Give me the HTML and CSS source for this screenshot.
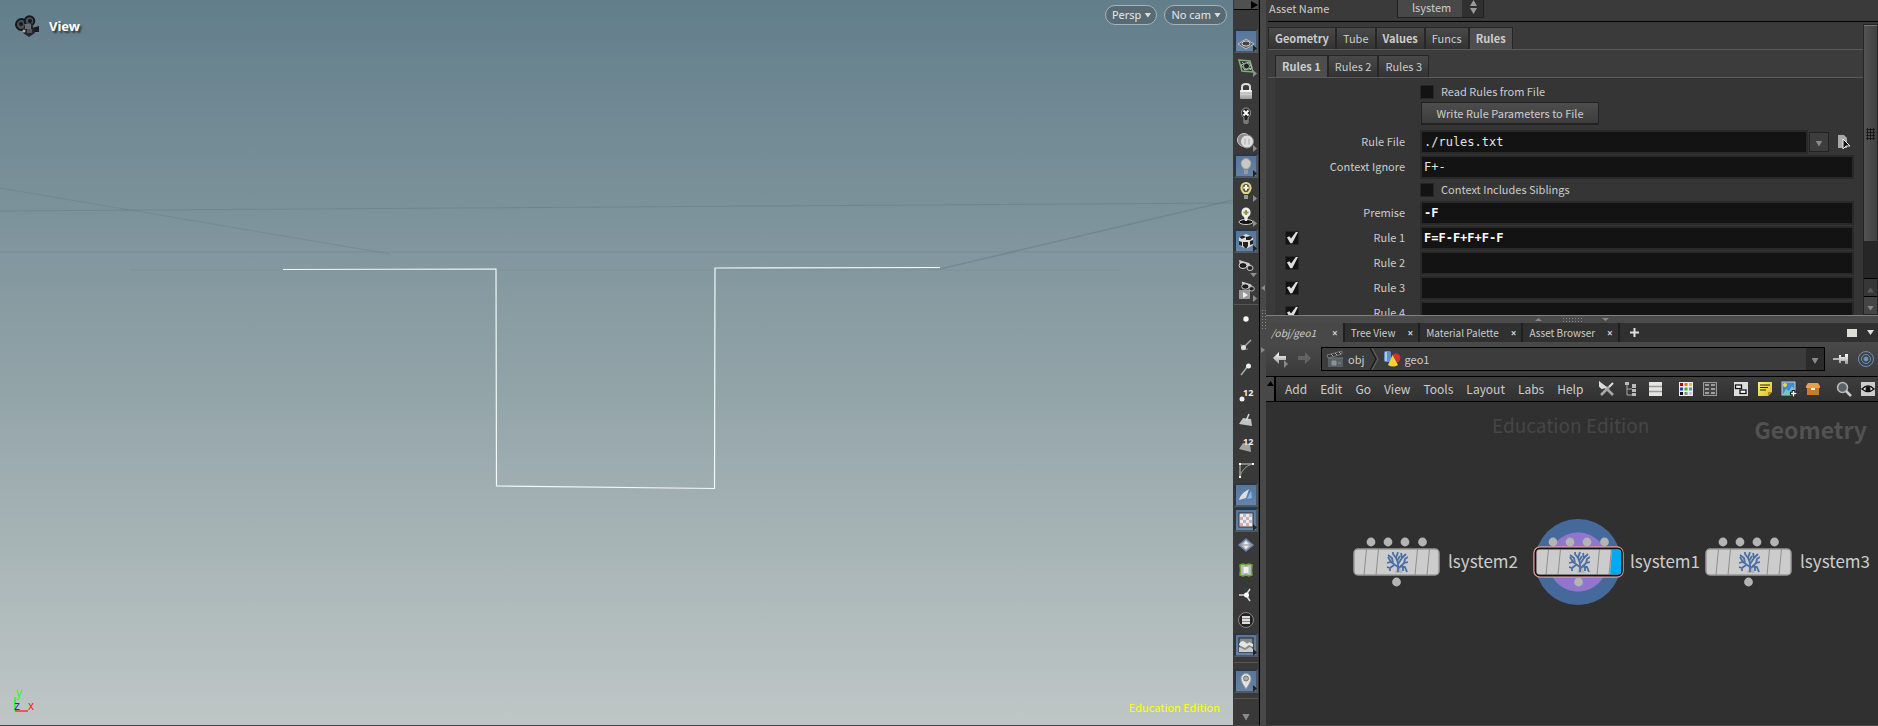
FILE: index.html
```
<!DOCTYPE html>
<html lang="en">
<head>
<meta charset="utf-8">
<title>/obj/geo1</title>
<link rel="stylesheet" href="styles.css">
</head>
<body>
<svg class="defs" aria-hidden="true">
  <defs>
    <linearGradient id="silver" x1="0" y1="0" x2="0" y2="1"><stop offset="0" stop-color="#fff"/><stop offset="1" stop-color="#999"/></linearGradient>
    <linearGradient id="yellow" x1="0" y1="0" x2="1" y2="1"><stop offset="0" stop-color="#fff27a"/><stop offset="1" stop-color="#d8c21c"/></linearGradient>
    <symbol id="tree" viewBox="0 0 22 22">
      <path d="M9 22L11 17H14L17 22Z" fill="#b4b4b0"/>
      <g fill="none" stroke="#4a6fa5" stroke-width="1.8">
        <path d="M12 21V12L10 7L12 1M10 7L7 3V1M12 13L16 7L15 2M16 7L20 3M12 16L5 11L1 12M5 11L2 6M7 12L6 7L2 4M8 14L4 17L1 16M13 17L18 12L22 11M18 12L19 8L22 6M14 15L19 16L21 21M17 16L17 20M11 10L14 5M4 17L4 20"/>
      </g>
    </symbol>
    <symbol id="node" viewBox="0 0 88 50">
      <g fill="#b4b4b4"><circle cx="18" cy="5" r="4.4"/><circle cx="35" cy="5" r="4.4"/><circle cx="52" cy="5" r="4.4"/><circle cx="69.500" cy="5" r="4.400"/><circle cx="43.500" cy="45" r="4.400"/></g>
      <rect x="1" y="12" width="85" height="26" rx="4" fill="#ccc" stroke="#999" stroke-width="1.500"/>
      <path d="M13.500 12L11 38M25.500 12L23 38M64.500 12L62 38M76.500 12L74 38" stroke="#8e8e8e" fill="none"/>
    </symbol>
    <symbol id="spec" viewBox="0 0 20 20">
      <path d="M3 4L13 7L17 12L4 9Z" fill="#ccc"/><ellipse cx="7" cy="9.500" rx="4" ry="3" fill="#1c1c1c" stroke="#ddd"/><ellipse cx="14" cy="12" rx="3" ry="2.500" fill="#222" stroke="#ccc"/>
    </symbol>
  </defs>
</svg>
<main class="app">
  <section class="viewport" aria-label="Viewport">
    <svg class="scene" viewBox="0 0 1233 725" preserveAspectRatio="none">
      <g fill="none" stroke="#4c6671" stroke-opacity=".26">
        <path d="M0 188L390 254" stroke-opacity=".2"/><path d="M0 211L1233 203"/><path d="M0 252H1233" stroke-opacity=".16"/><path d="M940 269L1233 200" stroke-width="1.500"/><path d="M130 270H1120" stroke-opacity=".12"/>
      </g>
      <path d="M283 269.500L496 269L496.500 486L714.500 488.500L715 268L940 267.500" fill="none" stroke="#f4f8f8" stroke-width="1.200"/>
    </svg>
    <header class="view-head">
      <div class="view-title">
        <svg width="26" height="24" viewBox="0 0 26 24"><path d="M17 13L24 11V17L18 17Z" fill="#191c1f"/><circle cx="6.500" cy="9.500" r="5.500" fill="#4b4f53" stroke="#16191b" stroke-width="2"/><circle cx="14.500" cy="6" r="4.800" fill="#4b4f53" stroke="#16191b" stroke-width="2"/><circle cx="6" cy="9" r="2" fill="#16191b"/><circle cx="15" cy="6" r="2" fill="#16191b"/><path d="M9 11L17 8L20 18L14 22L8 18Z" fill="#24282b"/><rect x="10" y="9" width="6" height="5" fill="#666d73"/><rect x="12" y="14" width="5" height="4" fill="#4f555a"/><circle cx="9" cy="16" r="1.500" fill="#aaa"/></svg>
        <h1>View</h1>
      </div>
      <div class="pills"><button class="pill">Persp<i class="tri"></i></button><button class="pill">No cam<i class="tri"></i></button></div>
    </header>
    <footer class="view-foot">
      <svg class="axes" width="24" height="32" viewBox="0 0 24 32"><path d="M4 27V13" stroke="#3f3" stroke-width="2"/><path d="M4 27H17" stroke="#e55" stroke-width="2"/><text x="5" y="13" fill="#2f2">y</text><text x="3" y="26" fill="#22f">z</text><text x="17" y="26" fill="#f22">x</text></svg>
      <span class="edition">Education Edition</span>
    </footer>
  </section>

  <nav class="tools" aria-label="Display options">
    <button class="tools-top" aria-label="Expand"><svg width="7" height="8" viewBox="0 0 7 8"><path d="M0 0L7 4L0 8Z" fill="#000"/></svg></button>
    <button class="tool on more"><svg viewBox="0 0 20 20"><path d="M2 13L10 8L18 13L10 18Z" fill="#666" stroke="#bbb"/><path d="M6 10.500L14 15.500M14 10.500L6 15.500" stroke="#999"/><ellipse cx="10" cy="12.500" rx="4" ry="2.500" fill="#444" stroke="#ccc"/></svg></button>
    <button class="tool more"><svg viewBox="0 0 20 20"><path d="M3 4L14 5L17 16L6 15Z" fill="#333" stroke="#79b277" stroke-width="1.500"/><path d="M6 6L15 14M5 9L13 6L16 12L9 14Z" fill="none" stroke="#bbb"/><circle cx="10.500" cy="10" r="3" fill="#222" stroke="#8dbb8a"/></svg></button>
    <button class="tool"><svg viewBox="0 0 20 20"><path d="M6 10V6Q6 3 10 3T14 6V10" fill="none" stroke="#ddd" stroke-width="2"/><rect x="4" y="9" width="12" height="9" rx="1" fill="url(#silver)"/><path d="M4 12H16M4 15H16" stroke="#aaa"/></svg></button>
    <button class="tool"><svg viewBox="0 0 20 20"><path d="M8 12Q5 9 5.500 6.500A4.500 4.500 0 0 1 14.500 6.500Q15 9 12 12V17H8Z" fill="#222" stroke="#999"/><path d="M7.500 4.500L12.500 9.500M12.500 4.500L7.500 9.500" stroke="#fff" stroke-width="1.800"/><path d="M8 14H12V18H8Z" fill="#777"/></svg></button>
    <button class="tool more"><svg viewBox="0 0 20 20"><circle cx="8" cy="9" r="6.500" fill="#888" stroke="#ccc"/><circle cx="11" cy="10.500" r="6.500" fill="#ddd" stroke="#888"/><path d="M9 7.500V13.500M13 7.500V13.500" stroke="#aaa"/></svg></button>
    <button class="tool on more"><svg viewBox="0 0 20 20"><path d="M8 13Q5 10 5 7.500A5 5 0 0 1 15 7.500Q15 10 12 13Z" fill="#c8c8c4" stroke="#999"/><path d="M8 14H12V18H8Z" fill="#999"/></svg></button>
    <button class="tool more"><svg viewBox="0 0 20 20"><path d="M8 12Q5 9 5.500 6.500A4.500 4.500 0 0 1 14.500 6.500Q15 9 12 12Z" fill="#555" stroke="#ded885" stroke-width="2"/><path d="M10 4V9.500M7.300 6.800H12.700" stroke="#fffbd0" stroke-width="2"/><path d="M8 14H12V18H8Z" fill="#999"/></svg></button>
    <button class="tool more"><svg viewBox="0 0 20 20"><ellipse cx="10" cy="16" rx="7" ry="2.500" fill="#111" stroke="#ccc"/><path d="M8 11Q5 9 5.500 6A4.500 4.500 0 0 1 14.500 6Q15 9 12 11L11 15H9Z" fill="#eee"/><path d="M10 4V9M7.500 6.500H12.500" stroke="#99983c" stroke-width="2"/></svg></button>
    <button class="tool on more"><svg viewBox="0 0 20 20"><path d="M3 6L10 3L17 6V14L10 18L3 14Z" fill="#ddd"/><path d="M3 6L7 4.500L10 6L6 8ZM10 6L14 5L17 6L14 9H10ZM3 10L6 11V15L3 14ZM7 11H12V15L10 18L7 15ZM14 10L17 9V13L14 14Z" fill="#222"/></svg></button>
    <button class="tool down"><svg viewBox="0 0 20 20"><use href="#spec" width="20" height="20"/></svg></button>
    <button class="tool more"><svg viewBox="0 0 20 20"><path d="M3 9H14V18H3Z" fill="#999"/><path d="M7 11L12 14L7 17Z" fill="#eee"/><use href="#spec" x="3" y="-3" width="18" height="18"/></svg></button>
    <hr>
    <button class="tool"><svg viewBox="0 0 20 20"><circle cx="10" cy="9" r="2.700" fill="#f4f4f0"/></svg></button>
    <button class="tool"><svg viewBox="0 0 20 20"><path d="M8 12L15 5" stroke="#aaa" stroke-width="1.500"/><path d="M5 9L6 15L12 14" fill="none" stroke="#888"/><circle cx="7.500" cy="12.500" r="2.500" fill="#ddd"/></svg></button>
    <button class="tool"><svg viewBox="0 0 20 20"><path d="M5 15L12 6" stroke="#aaa" stroke-width="1.500"/><circle cx="12.500" cy="6" r="2.500" fill="#eee"/></svg></button>
    <button class="tool"><svg viewBox="0 0 20 20"><circle cx="6" cy="14" r="2.500" fill="#eee"/><text x="7" y="11" class="num">12</text></svg></button>
    <button class="tool"><svg viewBox="0 0 20 20"><path d="M3 14L7 8L15 9L16 16Z" fill="#c4c4be"/><path d="M10 11L13 4" stroke="#ddd" stroke-width="1.500"/></svg></button>
    <button class="tool"><svg viewBox="0 0 20 20"><path d="M3 14L7 8L14 9L15 17Z" fill="#a4a49e"/><text x="7" y="10" class="num">12</text></svg></button>
    <button class="tool"><svg viewBox="0 0 20 20"><path d="M4 17V4H17" fill="none" stroke="#ccc"/><path d="M4 16Q7 7 16 4" fill="none" stroke="#999"/><path d="M3 3H5V5H3ZM16 3H18V5H16ZM3 16H5V18H3Z" fill="#fff"/></svg></button>
    <button class="tool on"><svg viewBox="0 0 20 20"><path d="M6 15L16 5L17 15Z" fill="#4f82be"/><path d="M3 15Q4 9 13 4L10 13Z" fill="#ddd"/><path d="M11 14L16 13L15 6Z" fill="#8db4dc"/></svg></button>
    <button class="tool on more"><svg viewBox="0 0 20 20"><rect x="3" y="3" width="14" height="14" fill="#eceae6" stroke="#333"/><path d="M7 4H10V7H7ZM13 4H16V7H13ZM7 10H10V13H7ZM13 10H16V13H13Z" fill="#a9bdd8"/><path d="M4 7H7V10H4ZM10 7H13V10H10ZM4 13H7V16H4ZM10 13H13V16H10Z" fill="#dfa6a3"/></svg></button>
    <button class="tool"><svg viewBox="0 0 20 20"><path d="M10 4L17 10L10 16L3 10Z" fill="#bbb" stroke="#5d83b0" stroke-width="1.500"/><path d="M10 6L13 10L10 14L7 10Z" fill="#eee"/><path d="M3 10H17" stroke="#888"/></svg></button>
    <button class="tool"><svg viewBox="0 0 20 20"><path d="M4 5L7 4L10 5L13 4L16 5L15.500 10L16 15L13 16L10 15L7 16L4 15L4.500 10Z" fill="#bbb" stroke="#68a83e" stroke-width="1.500"/><rect x="7.500" y="7" width="5" height="6" fill="#eee"/></svg></button>
    <button class="tool"><svg viewBox="0 0 20 20"><path d="M3 10H10L14 4M10 10L14 16" fill="none" stroke="#ddd" stroke-width="1.500"/><circle cx="10.500" cy="10" r="2.500" fill="#fff"/></svg></button>
    <button class="tool"><svg viewBox="0 0 20 20"><circle cx="10" cy="10" r="7.500" fill="#222" stroke="#888"/><path d="M6 6H14V14H6Z" fill="#ddd"/><path d="M6 8.500H14M6 11.500H14" stroke="#888"/></svg></button>
    <button class="tool on more"><svg viewBox="0 0 20 20"><rect x="3" y="3" width="14" height="14" fill="#888" stroke="#222"/><path d="M3 9Q6 4 9 7T13 7L17 9V12L13 10L9 13L3 10Z" fill="#e5e5e5"/><path d="M3 12L9 15L14 12L17 14V17H3Z" fill="#ccc"/></svg></button>
    <hr class="wide">
    <button class="tool on more"><svg viewBox="0 0 20 20"><path d="M10 18Q5 11 5 7.500A5 5 0 0 1 15 7.500Q15 11 10 18Z" fill="#e2e2de" stroke="#999"/><circle cx="10" cy="7.500" r="2.500" fill="#aaa" stroke="#777"/></svg></button>
    <hr class="wide">
    <button class="tool" aria-label="More"><i class="tri dim"></i></button>
  </nav>

  <div class="vsplit"><i class="left"></i><i class="grip"></i><i class="right"></i></div>

  <div class="side">
    <section class="params" aria-label="Parameters">
      <div class="asset"><label for="asset">Asset Name</label><span class="combo"><select id="asset"><option>lsystem</option></select><svg width="7" height="14" viewBox="0 0 7 14"><path d="M0 6L3.500 0L7 6ZM0 8H7L3.500 14Z" fill="#999"/></svg></span></div>
      <div class="pbody">
        <div class="pmain">
          <div class="tabs"><button><b>Geometry</b></button><button>Tube</button><button><b>Values</b></button><button>Funcs</button><button class="sel"><b>Rules</b></button></div>
          <div class="tabs inner"><button class="sel"><b>Rules 1</b></button><button>Rules 2</button><button>Rules 3</button></div>
          <form class="form">
            <div class="row check"><input type="checkbox" id="read"><label for="read">Read Rules from File</label></div>
            <div class="row action"><button type="button" class="btn">Write Rule Parameters to File</button></div>
            <div class="row"><label class="lab" for="rf">Rule File</label><input class="field" id="rf" value="./rules.txt"><button type="button" class="drop" aria-label="Recent files"><i class="tri dim"></i></button><button type="button" class="file" aria-label="Choose file"><svg width="14" height="16" viewBox="0 0 14 16"><path d="M1 1H7L10 4V14H1Z" fill="#a9a9a9"/><path d="M6 5L13 12L9 12L6 15Z" fill="#111" stroke="#eee"/></svg></button></div>
            <div class="row"><label class="lab" for="ci">Context Ignore</label><input class="field" id="ci" value="F+-"></div>
            <div class="row check"><input type="checkbox" id="sib"><label for="sib">Context Includes Siblings</label></div>
            <div class="row"><label class="lab" for="pr">Premise</label><input class="field bold" id="pr" value="-F"></div>
            <div class="row"><input type="checkbox" checked aria-label="Use rule 1"><label class="lab" for="r1">Rule 1</label><input class="field bold" id="r1" value="F=F-F+F+F-F"></div>
            <div class="row"><input type="checkbox" checked aria-label="Use rule 2"><label class="lab" for="r2">Rule 2</label><input class="field" id="r2"></div>
            <div class="row"><input type="checkbox" checked aria-label="Use rule 3"><label class="lab" for="r3">Rule 3</label><input class="field" id="r3"></div>
            <div class="row"><input type="checkbox" checked aria-label="Use rule 4"><label class="lab" for="r4">Rule 4</label><input class="field" id="r4"></div>
          </form>
        </div>
        <div class="scroll"><div class="thumb"><i></i></div><div class="track"></div><button class="up" aria-label="Scroll up"><i class="tri"></i></button><button aria-label="Scroll down"><i class="tri"></i></button></div>
      </div>
    </section>

    <div class="hsplit"><i class="tri flip"></i><i class="grip"></i><i class="tri"></i></div>

    <section class="network" aria-label="Network editor">
      <div class="panes"><button class="sel"><em>/obj/geo1</em><span>×</span></button><button>Tree View<span>×</span></button><button>Material Palette<span>×</span></button><button>Asset Browser<span>×</span></button><button class="plus" aria-label="New tab"><svg width="9" height="9" viewBox="0 0 9 9"><path d="M4.500 0V9M0 4.500H9" stroke="#ddd" stroke-width="2"/></svg></button><i class="win"></i><i class="tri"></i></div>
      <div class="path">
        <button aria-label="Back"><svg width="17" height="18" viewBox="0 0 17 18"><path d="M1 8L7 2V6H14V10H7V14Z" fill="url(#silver)"/><path d="M12 10L16 14L12 18Z" fill="#888"/></svg></button>
        <button aria-label="Forward"><svg width="17" height="18" viewBox="0 0 17 18"><path d="M14 8L8 2V6H1V10H8V14Z" fill="#626262"/></svg></button>
        <div class="crumbs">
          <svg width="18" height="18" viewBox="0 0 18 18"><rect x="2" y="8" width="15" height="9" fill="#566066"/><path d="M1 5L16 1V4L2 8ZM2 8H17" fill="#333" stroke="#777"/><path d="M5 4L7 6M9 3L11 5M13 2L15 4" stroke="#aaa"/><path d="M6 11H10V15H6ZM12 13H15" fill="#88949a" stroke="#88949a"/></svg>
          <a href="#obj">obj</a>
          <svg class="chev" width="10" height="22" viewBox="0 0 10 22"><path d="M1 0L7 11L1 22" fill="none" stroke="#111"/><path d="M3 0L9 11L3 22" fill="none" stroke="#666"/></svg>
          <svg width="18" height="18" viewBox="0 0 18 18"><rect x="1" y="1" width="7" height="11" rx="2" fill="#5f8fcd"/><rect x="2" y="2" width="2" height="9" fill="#a9c8ed"/><circle cx="13" cy="8" r="4.500" fill="#d2342c"/><path d="M9.500 5L15 15Q10 18 5 15Z" fill="#f2d535"/></svg>
          <a href="#geo1">geo1</a>
          <button class="pdrop" aria-label="Path history"><i class="tri dim"></i></button>
        </div>
        <svg width="16" height="14" viewBox="0 0 16 14"><path d="M0 7H7" stroke="#ddd" stroke-width="1.500"/><path d="M6 3H8V5H12V2H15V12H12V9H8V11H6Z" fill="url(#silver)"/></svg>
        <svg width="18" height="18" viewBox="0 0 18 18" fill="none" stroke="#6b90bd"><circle cx="9" cy="9" r="7.500"/><circle cx="9" cy="9" r="4.500"/><circle cx="9" cy="9" r="2" fill="#5c9cec"/></svg>
      </div>
      <div class="menubar">
        <span class="handle"><i class="tri flip"></i></span>
        <button>Add</button><button>Edit</button><button>Go</button><button>View</button><button>Tools</button><button>Layout</button><button>Labs</button><button>Help</button>
        <div class="icons">
          <svg viewBox="0 0 16 16"><path d="M2 14L10 6M6 6L14 14" stroke="#aaa" stroke-width="2.500"/><path d="M10 6L14 2M1 2L6 6L3 7L1 5Z" fill="#ccc" stroke="#ddd" stroke-width="2"/></svg>
          <svg viewBox="0 0 16 16"><path d="M4 4V14H9M4 8H9" fill="none" stroke="#aaa"/><path d="M2 1H6V4H2ZM9 3H13V7H9ZM9 8H13V11H9ZM9 12H13V15H9Z" fill="#bbb"/></svg>
          <svg viewBox="0 0 16 16"><rect x="2" y="1" width="13" height="14" fill="#e6e6e0"/><path d="M2 5.500H15M2 10.500H15" stroke="#999" stroke-width="1.500"/></svg>
          <svg class="gap" viewBox="0 0 16 16"><path d="M1 1H15V15H1Z" fill="#eee"/><path d="M2 2H5V5H2Z" fill="#b00"/><path d="M6.500 2H9.500V5H6.500Z" fill="#e70"/><path d="M11 2H14V5H11Z" fill="#dc0"/><path d="M2 6.500H5V9.500H2Z" fill="#24a"/><path d="M6.500 6.500H9.500V9.500H6.500Z" fill="#4a2"/><path d="M11 6.500H14V9.500H11Z" fill="#59c"/><path d="M2 11H5V14H2Z" fill="#111"/><path d="M6.500 11H9.500V14H6.500Z" fill="#888"/><path d="M11 11H14V14H11Z" fill="#ccc"/></svg>
          <svg viewBox="0 0 16 16"><rect x="1.500" y="1.500" width="13" height="13" fill="#444" stroke="#999"/><path d="M3 4H7M9 4H13M3 8H7M9 8H13M3 12H7M9 12H13" stroke="#bbb" stroke-width="1.500"/></svg>
          <svg class="gap" viewBox="0 0 16 16"><rect x="1" y="1" width="14" height="14" fill="#ddd"/><rect x="2.500" y="4" width="6" height="3.500" fill="#fff" stroke="#111" stroke-width="1.300"/><rect x="7" y="9" width="6" height="3.500" fill="#fff" stroke="#111" stroke-width="1.300"/></svg>
          <svg viewBox="0 0 16 16"><path d="M1 1H15V11L11 15H1Z" fill="url(#yellow)"/><path d="M11 15V11H15" fill="#aa9617"/><path d="M3 4H13M3 6.500H11M3 9H9" stroke="#222"/></svg>
          <svg viewBox="0 0 16 16"><rect x="1" y="1" width="13" height="13" fill="#3e8ad4" stroke="#ccc"/><path d="M1.500 14L5 8L8 10L11 5L14 9V14Z" fill="#78c5bd"/><circle cx="4" cy="4" r="2" fill="#eddb31"/><path d="M12.500 9V16M9 12.500H16" stroke="#111" stroke-width="3.500"/><path d="M12.500 10V15.500M10 12.500H15.500" stroke="#fff" stroke-width="1.500"/></svg>
          <svg viewBox="0 0 16 16"><path d="M2 7H14V14H2Z" fill="#c67d28"/><path d="M1 5L3 2H13L15 5V7H1Z" fill="#e7a14a"/><path d="M6 7H10V9H6Z" fill="#eee"/></svg>
          <svg class="gap" viewBox="0 0 16 16"><circle cx="6.500" cy="6.500" r="5" fill="#5a6468" stroke="#bbb" stroke-width="1.500"/><path d="M10 10L15 15" stroke="#ccc" stroke-width="2.500"/></svg>
          <svg viewBox="0 0 16 16"><rect x="1" y="1" width="14" height="14" fill="#ccc"/><path d="M2 8Q8 2 14 8Q8 13 2 8Z" fill="#fff" stroke="#111" stroke-width="1.500"/><circle cx="8" cy="8" r="2.500" fill="#111"/></svg>
        </div>
      </div>
      <div class="canvas">
        <span class="mark">Education Edition</span><span class="kind">Geometry</span>
        <div class="node n2"><svg width="88" height="50" viewBox="0 0 88 50"><use href="#node" width="88" height="50"/><use href="#tree" x="33" y="14" width="22" height="22"/></svg><span>lsystem2</span></div>
        <div class="halo"></div>
        <div class="node n1"><svg width="88" height="50" viewBox="0 0 88 50" overflow="visible"><rect x="-1" y="10" width="89" height="30" rx="6" fill="#111" stroke="#d59a98" stroke-width="1.500"/><use href="#node" width="88" height="50"/><path d="M77 12.500H82Q86 12.500 86 16V34Q86 37.500 82 37.500H75Z" fill="#00aaf2"/><rect x="0.500" y="11.500" width="86.500" height="27" rx="4" fill="none" stroke="#111" stroke-width="1.500"/><use href="#tree" x="33" y="14" width="22" height="22"/></svg><span>lsystem1</span></div>
        <div class="node n3"><svg width="88" height="50" viewBox="0 0 88 50"><use href="#node" width="88" height="50"/><use href="#tree" x="33" y="14" width="22" height="22"/></svg><span>lsystem3</span></div>
      </div>
    </section>
  </div>
</main>
</body>
</html>
```
FILE: styles.css
```
* { box-sizing: border-box; }
body { margin: 0; background: #3a3a3a; color: #ccc; font: 11px/18px "Noto Sans CJK SC", "Noto Sans", sans-serif; }
button, input, select { font: inherit; color: inherit; margin: 0; padding: 0; border: 0; background: none; border-radius: 0; }
a { color: inherit; text-decoration: none; }
svg { display: block; flex: none; }
.defs { position: absolute; width: 0; height: 0; }
.app { display: flex; height: 100vh; overflow: hidden; border-bottom: 1px solid #444; }

.tri { display: inline-block; flex: none; width: 7px; height: 5px; background: #ddd; clip-path: polygon(0 0, 100% 0, 50% 100%); }
.tri.dim { background: #8a8a8a; }
.tri.flip { clip-path: polygon(50% 0, 100% 100%, 0 100%); }
.grip { width: 20px; height: 5px; background: radial-gradient(#888 35%, transparent 45%) 0 0 / 3px 3px; }

.viewport { position: relative; flex: 1; min-width: 0; display: flex; flex-direction: column; justify-content: space-between; background: linear-gradient(#627e8b, #8fa1a6 50%, #bfc7c6); }
.scene { position: absolute; inset: 0; width: 100%; height: 100%; }
.view-head, .view-foot { position: relative; display: flex; justify-content: space-between; }
.view-head { padding: 5px 6px 0 15px; align-items: flex-start; }
.view-title { display: flex; align-items: center; gap: 8px; padding-top: 10px; color: #fff; }
h1 { margin: 0; padding-bottom: 2px; font: bold 13px/22px "Noto Sans", sans-serif; text-shadow: 2px 2px 2px #2a3438; }
.pills { display: flex; gap: 7px; }
.pill { display: flex; align-items: center; gap: 3px; height: 20px; padding: 0 5px 0 6px; border: 1px solid #a9b3b7; border-radius: 10px; background: #586b74; color: #e4e8e9; font: 11px/16px "Noto Sans", sans-serif; }
.view-foot { padding: 0 13px 9px 11px; align-items: flex-end; }
.axes { overflow: visible; font: 12px "Liberation Sans", sans-serif; }
.edition { color: #ff0; }

.tools { width: 26px; flex: none; display: flex; flex-direction: column; align-items: center; background: #393939; overflow: hidden; }
.tools-top { display: flex; justify-content: flex-end; align-items: center; flex: none; width: 24px; height: 10px; margin-bottom: 19px; border-bottom: 1px solid #000; background: #505050; }
.tool { position: relative; flex: none; width: 24px; height: 24px; margin-bottom: 1px; display: flex; align-items: center; justify-content: center; }
.tool svg { width: 20px; height: 20px; }
.tool .tri { width: 8px; height: 7px; }
.tool.on { border: 2px solid #2b3640; border-right-color: #4d5a66; border-bottom-color: #4d5a66; background: linear-gradient(#56769c, #6683a5); }
.more::after, .down::after { content: ""; position: absolute; right: 1px; bottom: 1px; width: 4px; height: 7px; background: #8e8e8e; clip-path: polygon(0 0, 100% 50%, 0 100%); }
.on.more::after { right: -1px; bottom: -1px; background: #222; }
.down::after { width: 7px; height: 4px; clip-path: polygon(0 0, 100% 0, 50% 100%); }
.num { font: bold 9px "Noto Sans", sans-serif; fill: #eee; }
.tools hr { width: 24px; height: 4px; margin: 0; border: 0; flex: none; border-top: 1px solid #555; }
.tools hr.wide { height: 7px; margin-top: 4px; }

.vsplit { width: 7px; flex: none; border-left: 1px solid #000; background: #484848; display: flex; flex-direction: column; align-items: center; padding-top: 285px; }
.vsplit i { flex: none; }
.vsplit .left, .vsplit .right { width: 4px; height: 6px; background: #888; clip-path: polygon(100% 0, 0 50%, 100% 100%); }
.vsplit .right { clip-path: polygon(0 0, 100% 50%, 0 100%); }
.vsplit .grip { width: 5px; height: 20px; margin: 18px 0; }

.side { width: 612px; flex: none; display: flex; flex-direction: column; min-width: 0; }
.params { flex: none; height: 315px; display: flex; flex-direction: column; overflow: hidden; padding-left: 2px; }
.asset { display: flex; align-items: center; flex: none; height: 22px; padding: 0 0 5px 1px; border-bottom: 1px solid #000; }
.asset label { width: 128px; }
.combo { display: flex; align-items: center; width: 87px; height: 22px; margin-top: -2px; border: 1px solid #202020; background: linear-gradient(90deg, #484848 64px, #303030 64px); }
.combo select { appearance: none; width: 64px; margin-right: 8px; padding-left: 14px; height: 18px; }
.pbody { display: flex; flex: 1; min-height: 0; padding-top: 2px; }
.pmain { flex: 1; min-width: 0; display: flex; flex-direction: column; padding-top: 3px; overflow: hidden; }
.tabs { display: flex; flex: none; height: 23px; border-bottom: 1px solid #5a5a5a; }
.tabs button { height: 22px; padding: 0 6px 1px; border: 1px solid #262626; border-bottom: 0; background: linear-gradient(#494949, #333); line-height: 19px; }
.tabs .sel { background: #4e4e4e; }
.tabs.inner { height: 28px; padding: 5px 0 0 7px; background: #3c3c3c; }
.form { flex: 1; margin-left: 7px; padding: 3px 9px 0 10px; background: #353535; }
.row { position: relative; display: flex; align-items: center; height: 25px; }
.row.check { height: 21px; padding-left: 135px; gap: 7px; }
.row.action { height: 27px; padding: 0 0 4px 136px; }
.btn { width: 178px; height: 23px; border: 1px solid #222; border-bottom-width: 2px; background: linear-gradient(#4d4d4d, #3c3c3c); line-height: 18px; }
.row label { padding-bottom: 1px; }
.lab { flex: 1; text-align: right; }
.field { width: calc(100% - 135px); flex: none; height: 24px; margin-left: 15px; padding: 0 2px; border: 2px solid #292929; background: #131313; color: #e4e4e4; font: 12px/20px "DejaVu Sans Mono", monospace; }
#rf { width: calc(100% - 181px); }
.field.bold { font-weight: bold; color: #fff; }
.drop { width: 20px; height: 20px; flex: none; margin-left: 1px; border: 1px solid #222; background: #3d3d3d; line-height: 10px; }
.drop .tri, .pdrop .tri { height: 6px; }
.file { width: 16px; margin: 0 1px 0 8px; }
.row input[type=checkbox] { appearance: none; flex: none; width: 14px; height: 14px; border: 1px solid #262626; background: #131313; }
.row input[type=checkbox]:checked::before { content: ""; display: block; width: 12px; height: 12px; background: #ddd; clip-path: polygon(8% 50%, 28% 40%, 42% 58%, 82% 5%, 100% 5%, 52% 98%, 36% 98%); }
.scroll { width: 15px; flex: none; display: flex; flex-direction: column; border: 1px solid #252525; background: #262626; }
.thumb { flex: 217; display: flex; align-items: center; justify-content: center; background: linear-gradient(90deg, #535353, #404040); border-top: 1px solid #777; }
.thumb i { width: 9px; height: 12px; background: radial-gradient(#111 45%, transparent 55%) 0 0 / 3px 3px; }
.track { flex: 37; }
.scroll button { height: 18px; line-height: 12px; border-top: 1px solid #000; background: #454545; }
.scroll .tri { background: #888; }
.scroll .up .tri { background: #5a5a5a; clip-path: polygon(50% 0, 100% 100%, 0 100%); }
.scroll .up { background: #373737; }

.hsplit { flex: none; height: 8px; display: flex; align-items: center; justify-content: center; gap: 20px; background: #4a4a4a; border-top: 1px solid #808080; }
.hsplit .tri { background: #888; height: 3px; }
.network { flex: 1; min-height: 0; display: flex; flex-direction: column; }
.panes { flex: none; display: flex; align-items: center; height: 19px; padding-right: 4px; background: #303030; font-size: 10px; line-height: 17px; }
.panes button { height: 19px; padding: 0 5px 0 6px; display: flex; align-items: center; gap: 12px; border-right: 2px solid #1f1f1f; }
.panes button.sel { background: #484848; padding-left: 5px; gap: 16px; }
.panes span { font: bold 10px/16px "Noto Sans", sans-serif; }
.panes .plus { border: 0; padding-left: 10px; }
.win { width: 10px; height: 8px; margin: 0 10px 0 auto; background: #deded8; }
.path { flex: none; display: flex; align-items: center; gap: 8px; height: 34px; padding: 0 3px 0 6px; background: linear-gradient(#4a4a4a, #3a3a3a); }
.crumbs { flex: 1; height: 24px; margin-left: -1px; padding-left: 4px; display: flex; align-items: center; gap: 4px; border: 1px solid #000; background: #3c3c3c; font-size: 11px; }
.pdrop { width: 18px; height: 22px; margin-left: auto; background: #2b2b2b; line-height: 10px; }
.menubar { flex: none; display: flex; align-items: center; height: 26px; padding-right: 2px; border: solid #000; border-width: 1px 0; background: linear-gradient(#3e3e3e, #313131); font-size: 12px; }
.menubar button { margin-right: 13px; }
.handle { width: 10px; height: 24px; margin-right: 9px; padding: 1px 0 0 1px; border-right: 2px solid #000; background: #484848; line-height: 6px; }
.handle .tri { background: #000; }
.icons { flex: 1; display: flex; justify-content: flex-end; gap: 8px; }
.icons svg { width: 16px; height: 16px; }
.icons .gap { margin-left: 7px; }
.canvas { position: relative; flex: 1; background: #303030; overflow: hidden; }
.mark, .kind { position: absolute; white-space: nowrap; }
.mark { left: 226px; top: 8px; font-size: 19px; line-height: 30px; color: #464646; }
.kind { right: 11px; top: 10px; font-size: 23px; line-height: 34px; font-weight: bold; color: #525252; }
.node { position: absolute; top: 135px; display: flex; align-items: center; gap: 7px; font-size: 17px; line-height: 28px; }
.node span { padding-bottom: 2px; }
.n2 { left: 87px; }
.n1 { left: 269px; }
.n3 { left: 439px; }
.halo { position: absolute; left: 269px; top: 117px; width: 86px; height: 86px; border-radius: 50%; background: radial-gradient(#9077cd 29px, #46699c 30px); }
```
